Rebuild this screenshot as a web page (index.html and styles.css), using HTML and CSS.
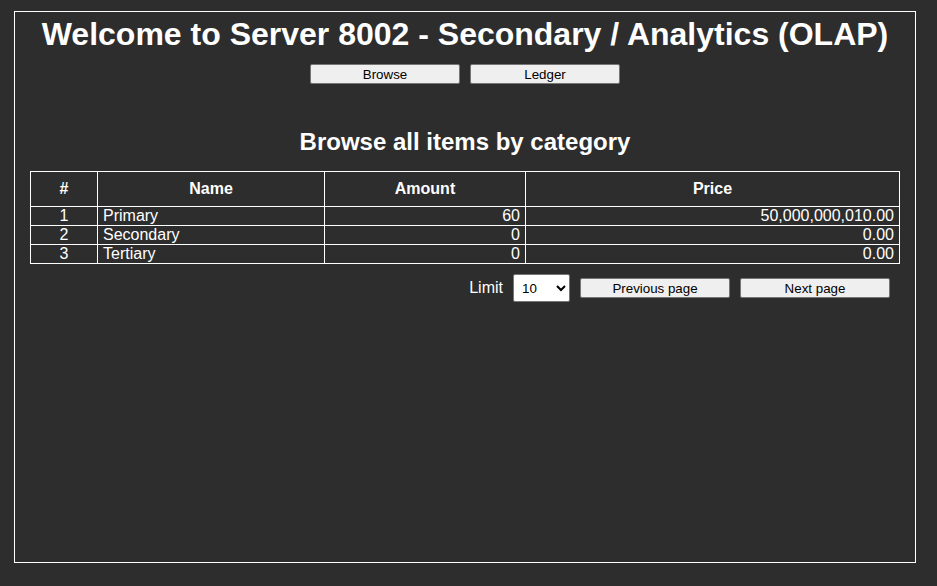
FILE: index.html
```html
<!DOCTYPE html>
<html>
<head>
<meta charset="utf-8">
<title>Server 8002</title>
<link rel="stylesheet" href="styles.css">
</head>
<body>
<div class="frame">
  <h1 class="title">Welcome to Server 8002 - Secondary / Analytics (OLAP)</h1>
  <nav class="nav">
    <button class="btn">Browse</button>
    <button class="btn">Ledger</button>
  </nav>
  <h2 class="subtitle">Browse all items by category</h2>
  <table class="grid">
    <colgroup>
      <col class="c1"><col class="c2"><col class="c3"><col class="c4">
    </colgroup>
    <thead>
      <tr><th>#</th><th>Name</th><th>Amount</th><th>Price</th></tr>
    </thead>
    <tbody>
      <tr><td class="ctr">1</td><td>Primary</td><td class="num">60</td><td class="num">50,000,000,010.00</td></tr>
      <tr><td class="ctr">2</td><td>Secondary</td><td class="num">0</td><td class="num">0.00</td></tr>
      <tr><td class="ctr">3</td><td>Tertiary</td><td class="num">0</td><td class="num">0.00</td></tr>
    </tbody>
  </table>
  <div class="pager">
    <span class="label">Limit</span>
    <select class="limit"><option>10</option><option>25</option><option>50</option></select>
    <button class="btn">Previous page</button>
    <button class="btn">Next page</button>
  </div>
</div>
</body>
</html>
```
FILE: styles.css
```css
html, body {
  margin: 0;
  padding: 0;
  background: #2d2d2d;
}
body {
  font-family: "Liberation Sans", Arial, sans-serif;
  color: #ffffff;
}
.frame {
  box-sizing: content-box;
  width: 870px;
  height: 550px;
  margin: 11px 0 0 14px;
  padding: 0 15px;
  border: 1px solid #ffffff;
}
.title {
  margin: 4px 0 0;
  font-size: 32px;
  line-height: 37px;
  font-weight: bold;
  text-align: center;
}
.nav {
  display: flex;
  justify-content: center;
  gap: 10px;
  margin-top: 11px;
}
.btn {
  width: 150px;
  height: 20px;
  padding: 0;
  font-family: "Liberation Sans", Arial, sans-serif;
  font-size: 13.33px;
  color: #000;
  background: #efefef;
  border: 1px solid #767676;
  border-radius: 2px;
}
.subtitle {
  margin: 44px 0 0;
  font-size: 24px;
  line-height: 28px;
  font-weight: bold;
  text-align: center;
}
.grid {
  margin-top: 15px;
  width: 869px;
  table-layout: fixed;
  border-collapse: collapse;
  font-size: 16px;
}
.c1 { width: 67px; }
.c2 { width: 227px; }
.c3 { width: 201px; }
.c4 { width: 374px; }
.grid th, .grid td {
  border: 1px solid #ffffff;
  line-height: 18px;
}
.grid th {
  padding: 8px 5px;
  font-weight: bold;
  text-align: center;
}
.grid td {
  padding: 0 5px;
  text-align: left;
}
.grid td.ctr { text-align: center; }
.grid td.num { text-align: right; }
.pager {
  display: flex;
  justify-content: flex-end;
  align-items: center;
  gap: 10px;
  margin: 10px 10px 0 0;
}
.label {
  font-size: 16px;
  line-height: 18px;
}
.limit {
  width: 57px;
  height: 28px;
  font-family: "Liberation Sans", Arial, sans-serif;
  font-size: 13.33px;
  background: #ffffff;
  color: #000;
  border: 1px solid #767676;
  border-radius: 2px;
  padding: 0 4px;
}
```
